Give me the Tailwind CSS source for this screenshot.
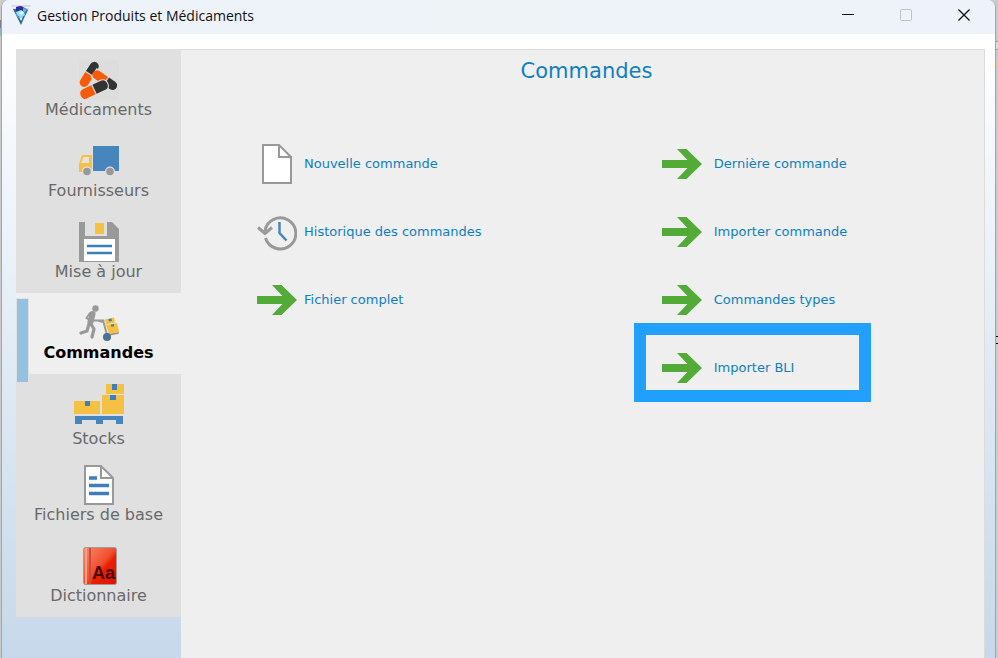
<!DOCTYPE html>
<html lang="fr">

<head>
  <meta charset="UTF-8">
  <title>Gestion Produits et Médicaments</title>
  <script src="https://cdn.jsdelivr.net/npm/@tailwindcss/browser@4"></script>
</head>

<body class="flex min-h-screen bg-[#cbcbcb] font-['DejaVu_Sans',sans-serif]">
  <!-- Arrière-plan visible à gauche -->
  <div class="w-px shrink-0">
    <div class="mt-5 h-2 bg-[#808080]"></div>
    <div class="h-2 bg-[#8fb4c8]"></div>
  </div>

  <div class="flex min-w-0 flex-1 flex-col overflow-hidden rounded-t-lg border-x border-[#a5a5a5] bg-white">
    <!-- Barre de titre -->
    <header class="flex h-[34px] items-start bg-linear-to-r from-[#eef2fa] via-[#edf3f7] to-[#eef2fa] pr-0.5">
      <svg class="mt-[5px] ml-[9px] size-5" viewBox="0 0 20 20">
        <path d="M0 0h20l-1 2H1zM2 3h16l-1 2H3z" fill="#d5dce3" />
        <path d="M2 4l3 6 5 10 4-9 3-6-3-2-4-2-4 3z" fill="#2b66a0" />
        <path d="M5 2l4-1 3 1 1 3-4 2-4-1z" fill="#2b2f96" />
        <path d="M5 7l5-2 3 2 1 3-4 3-4-3z" fill="#8ee6ee" />
        <path d="M8 8l3-2 2 2-3 2zM8 12l2 1 2-1-2 4z" fill="#e9fbff" />
        <path d="M12 3l4 1-2 4-2-2zM4 7l2 4 2 3-1-4z" fill="#5fb0d4" />
      </svg>
      <span class="ml-1.5 flex-1 pt-1.5 font-['Open_Sans',sans-serif] text-[14px] leading-5 text-[#111]">Gestion Produits et Médicaments</span>
      <button type="button" aria-label="Réduire" class="flex h-[30px] w-[58px] items-center justify-center">
        <svg class="size-3" viewBox="0 0 12 12"><path d="M0 5.5h12" stroke="#000" /></svg>
      </button>
      <button type="button" disabled aria-label="Agrandir" class="flex h-[30px] w-[58px] items-center justify-center">
        <svg class="size-3" viewBox="0 0 12 12"><rect x=".5" y=".5" width="11" height="11" rx="1" fill="none" stroke="#bfc3c6" /></svg>
      </button>
      <button type="button" aria-label="Fermer" class="flex h-[30px] w-[58px] items-center justify-center">
        <svg class="size-3" viewBox="0 0 12 12"><path d="M.5.5l11 11M11.5.5l-11 11" stroke="#111" stroke-width="1.3" /></svg>
      </button>
    </header>

    <main class="flex flex-1 items-stretch bg-linear-to-b from-white to-[#c6d8ea] pt-[15px] pr-2.5 pl-3.5">
      <!-- Menu latéral -->
      <nav class="w-[165px] shrink-0 self-start bg-[#e0e0e0] pt-px text-center text-[16px] leading-[18px] text-[#696969]">
        <a href="#" class="flex h-[81px] flex-col items-center gap-px pt-2.5">
          <svg class="size-10" viewBox="0 0 40 40">
            <rect width="40" height="40" fill="#dddddd" />
            <!-- chaque gélule : moitié sombre à droite, moitié orange à gauche -->
            <g transform="translate(10.500 14) rotate(-58)">
              <path d="M.6-4.500H9a4.500 4.500 0 0 1 0 9H.6z" fill="#333" />
              <path d="M-.6-4.500H-10a4.500 4.500 0 0 0 0 9H-.6z" fill="#fa5a05" />
            </g>
            <g transform="translate(27 21) rotate(34)">
              <path d="M-15-5.500H9a5.500 5.500 0 0 1 0 11H-15z" fill="#ddd" />
              <path d="M.6-4.500H8a4.500 4.500 0 0 1 0 9H.6z" fill="#333" />
              <path d="M-.6-4.500H-11a4.500 4.500 0 0 0 0 9H-.6z" fill="#fa5a05" />
            </g>
            <g transform="translate(15 29.500) rotate(-25)">
              <rect x="-15.500" y="-6" width="31" height="12" rx="5" fill="#ddd" />
              <path d="M.6-5H10a4.500 4.500 0 0 1 4.500 4.500V1A4 4 0 0 1 10 5H.6z" fill="#333" />
              <path d="M-.6-5H-10a4.500 4.500 0 0 0-4.500 4.500V1A4 4 0 0 0-10 5H-.6z" fill="#fa5a05" />
            </g>
          </svg>
          Médicaments
        </a>
        <a href="#" class="flex h-[81px] flex-col items-center gap-px pt-2.5">
          <svg class="size-10" viewBox="0 0 40 40">
            <path d="M14 5h26v25H14z" fill="#4785bd" />
            <path d="M3 14h10v17H0V23z" fill="#f5c142" />
            <path d="M4.500 16H10v6H2z" fill="#e6e3dc" />
            <circle cx="8" cy="30.500" r="5" fill="#e0e0e0" />
            <circle cx="31" cy="30.500" r="5" fill="#e0e0e0" />
            <circle cx="8" cy="30.500" r="3.800" fill="#999" />
            <circle cx="31" cy="30.500" r="3.800" fill="#999" />
          </svg>
          Fournisseurs
        </a>
        <a href="#" class="flex h-[81px] flex-col items-center gap-px pt-2.5">
          <svg class="size-10" viewBox="0 0 40 40">
            <path d="M0 0h6v14h22V0h5l7 7v33H0z" fill="#999" />
            <path d="M16 1h9v11h-9z" fill="#f5c142" />
            <path d="M5 17h31v22H5z" fill="#fff" />
            <path d="M8 24h25M8 31h25" stroke="#3d7fba" stroke-width="2.500" />
          </svg>
          Mise à jour
        </a>
        <a href="#" aria-current="page" class="relative flex h-[81px] flex-col items-center gap-px bg-[#efefef] pt-2.5 font-bold text-black">
          <span class="absolute top-[5px] left-0 z-10 h-[84px] w-[13px] border border-b-0 border-[#e0e0e0] bg-[#95c1e0]"></span>
          <svg class="size-10" viewBox="0 0 40 40">
            <g fill="none" stroke="#999" stroke-linecap="round" stroke-linejoin="round">
              <path d="M13.500 11L11.500 19" stroke-width="6" />
              <path d="M11 10L7.500 15l5 2.500h12" stroke-width="2" />
              <path d="M10 21L8 28l-6 2M12 21l3 5-2 8" stroke-width="3.200" />
              <path d="M20 18l4.500 1 3.500 13 11-2" stroke-width="2" />
            </g>
            <circle cx="16.500" cy="5.500" r="3.200" fill="#999" />
            <path d="M26 16.500l9-2 1 5-9 2z" fill="#f5c142" />
            <path d="M27 22l11-2 2 9-10 2z" fill="#f5c142" />
            <path d="M29.500 16l3-.5.500 2.500-3 .500zM32 21.500l3-.5v2.500h-3z" fill="#3d7fba" />
            <circle cx="28" cy="34" r="4" fill="#4c718a" />
          </svg>
          Commandes
        </a>
        <a href="#" class="flex h-[81px] flex-col items-center gap-px pt-2.5">
          <svg class="h-[45px] w-[50px]" viewBox="0 0 50 45">
            <path d="M32 0h18v10H32zM28 11h22v19H28zM0 17h26v13H0z" fill="#f5c142" />
            <path d="M11 17h5v5h-5zM38 0h5v6h-5zM36 11h6v5h-6z" fill="#3d7fba" />
            <path d="M1 32h48v8h-7v-4H29v4h-7v-4H8v4H1z" fill="#4785bd" />
          </svg>
          Stocks
        </a>
        <a href="#" class="flex h-[81px] flex-col items-center gap-px pt-2.5">
          <svg class="size-10" viewBox="0 0 40 40">
            <path d="M6 1h16l12 12v26H6z" fill="#fff" stroke="#999" stroke-width="2" />
            <path d="M22 1v12h12" fill="none" stroke="#999" stroke-width="2" />
            <path d="M10 13h8M10 20.500h20M10 28.500h20" stroke="#3d7fba" stroke-width="3.500" />
          </svg>
          Fichiers de base
        </a>
        <a href="#" class="flex h-[81px] flex-col items-center gap-px pt-2.5">
          <svg class="size-10" viewBox="0 0 40 40">
            <defs>
              <linearGradient id="cover" x1="0" y1="0" x2="1" y2="1">
                <stop offset="0" stop-color="#fa8a6c" />
                <stop offset=".5" stop-color="#f04e30" />
                <stop offset=".6" stop-color="#ea2000" />
                <stop offset="1" stop-color="#e51000" />
              </linearGradient>
            </defs>
            <rect x="4.500" y="1.500" width="33" height="37" rx="2" fill="url(#cover)" stroke="#a39a98" />
            <path d="M11 2v36" stroke="#d24a33" stroke-width="2" />
            <path d="M7 2v36" stroke="#f8a08a" stroke-width="2" />
            <text x="13" y="33" font-family="Liberation Sans, sans-serif" font-weight="bold" font-size="18" fill="#4a0500">Aa</text>
          </svg>
          Dictionnaire
        </a>
      </nav>

      <!-- Panneau principal -->
      <section class="flex-1 border-t border-r border-[#dcdcdc] bg-[#efefef] text-[13px] text-[#0f7fc3]">
        <h1 class="h-20 pt-1.5 pl-2 text-center text-[21px] leading-[30px]">Commandes</h1>

        <svg class="hidden">
          <symbol id="fleche" viewBox="0 0 40 40">
            <path d="M0 16h25.500L15 5h9.500L40 20 24.500 35H15l10.500-11H0z" fill="#53ab37" />
          </symbol>
        </svg>

        <div class="grid grid-cols-[5fr_4fr] gap-x-0.5 pl-[76px]">
          <a href="#" class="flex h-[68px] items-center gap-[7px]">
            <svg class="size-10" viewBox="0 0 40 40">
              <path d="M6 1h16l12 12v26H6z" fill="#fff" stroke="#999" stroke-width="2" />
              <path d="M22 1v12h12" fill="none" stroke="#999" stroke-width="2" />
            </svg>
            Nouvelle commande
          </a>
          <a href="#" class="flex h-[68px] items-center gap-3">
            <svg class="size-10"><use href="#fleche" /></svg>
            Dernière commande
          </a>
          <a href="#" class="flex h-[68px] items-center gap-[7px]">
            <svg class="size-10" viewBox="0 0 40 40">
              <path d="M8 19A15.500 15.500 0 1 1 8.500 26" fill="none" stroke="#999" stroke-width="3" />
              <path d="M1 15.500l7 6 7-6" fill="none" stroke="#999" stroke-width="3" />
              <path d="M22.500 10v11l7 7.500" fill="none" stroke="#4785bd" stroke-width="2.500" />
            </svg>
            Historique des commandes
          </a>
          <a href="#" class="flex h-[68px] items-center gap-3">
            <svg class="size-10"><use href="#fleche" /></svg>
            Importer commande
          </a>
          <a href="#" class="flex h-[68px] items-center gap-[7px]">
            <svg class="size-10"><use href="#fleche" /></svg>
            Fichier complet
          </a>
          <a href="#" class="flex h-[68px] items-center gap-3">
            <svg class="size-10"><use href="#fleche" /></svg>
            Commandes types
          </a>
          <a href="#" class="relative col-start-2 flex h-[68px] items-center gap-3">
            <!-- Cadre de mise en évidence -->
            <span class="absolute -top-[11px] -left-7 h-[79px] w-[237px] border-12 border-[#22a0ff]"></span>
            <svg class="size-10"><use href="#fleche" /></svg>
            Importer BLI
          </a>
        </div>
      </section>
    </main>
  </div>

  <!-- Arrière-plan visible à droite -->
  <div class="w-0.5 shrink-0">
    <div class="mt-[41px] h-[9px] border-y border-[#999] bg-[#dcdcdc]"></div>
    <div class="mt-3 h-1 bg-[#e3cfa0]"></div>
    <div class="mt-[270px] h-2 border-y border-black"></div>
  </div>
</body>

</html>
